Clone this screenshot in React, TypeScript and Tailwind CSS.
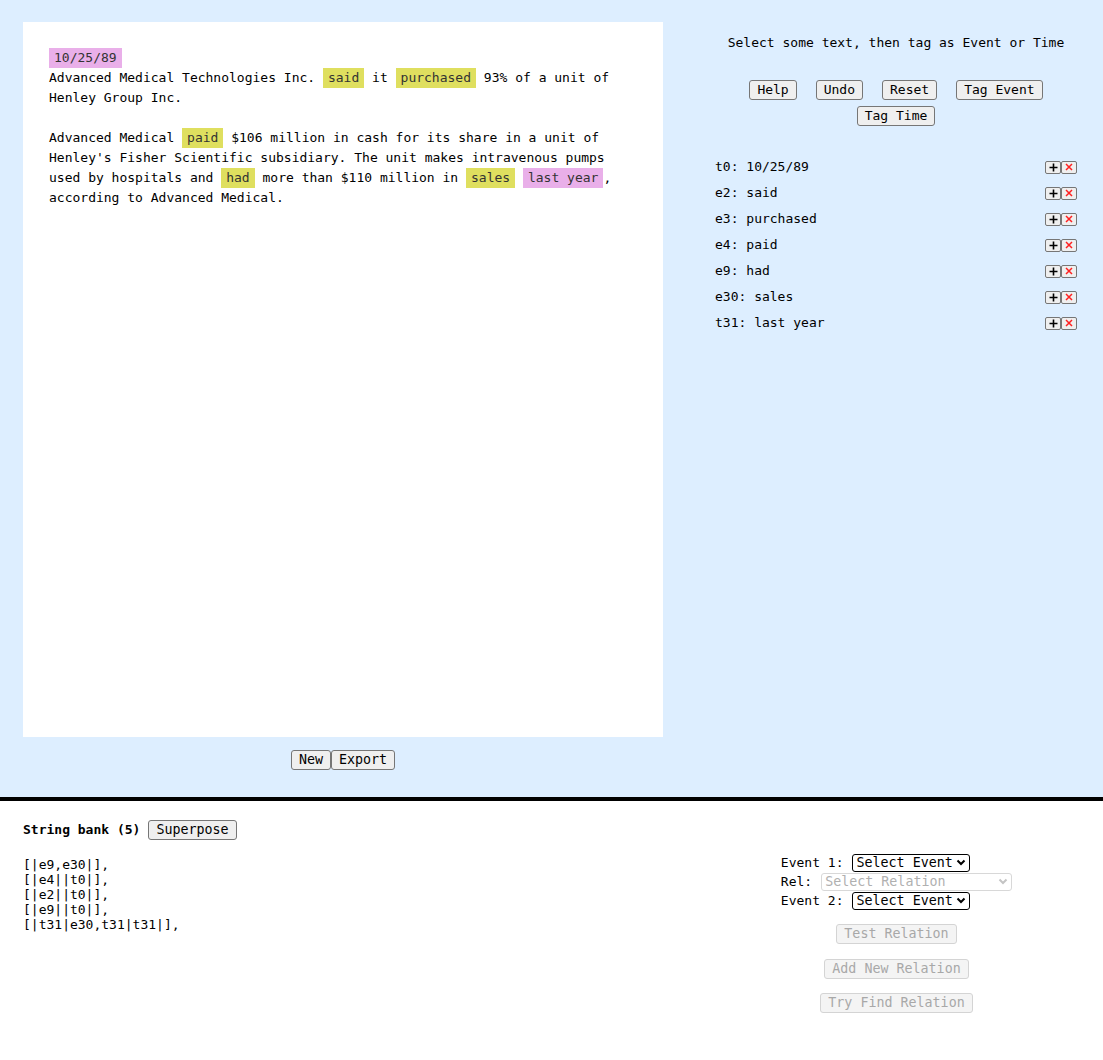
import React from "react";

// Tagged spans in the document text
const Ev = ({ children }: { children: React.ReactNode }) => (
  <span className="inline-block bg-[#dfdf5f] px-[5px] leading-5 text-[#333]">{children}</span>
);
const Tm = ({ children }: { children: React.ReactNode }) => (
  <span className="inline-block bg-[#e9afe9] px-[5px] leading-5 text-[#333]">{children}</span>
);

const Btn = ({
  children,
  disabled,
  small,
}: {
  children: React.ReactNode;
  disabled?: boolean;
  small?: boolean;
}) => (
  <button
    disabled={disabled}
    className={
      (disabled
        ? "border border-[#d4d4d4] bg-[#f4f4f4] text-[#a8a8a8] "
        : "border border-[#767676] bg-[#efefef] text-black ") +
      "rounded-[3px] px-[7px] py-[1px] leading-4 " +
      (small ? "text-[13px]" : "text-[13.33px]")
    }
  >
    {children}
  </button>
);

const Chevron = ({ color }: { color: string }) => (
  <svg width="10" height="7" viewBox="0 0 10 7" className="pointer-events-none absolute right-[4px] top-[6px]">
    <path d="M1.5 1.5 L5 5 L8.5 1.5" fill="none" stroke={color} strokeWidth="2" />
  </svg>
);

const tags = [
  ["t0", "10/25/89"],
  ["e2", "said"],
  ["e3", "purchased"],
  ["e4", "paid"],
  ["e9", "had"],
  ["e30", "sales"],
  ["t31", "last year"],
];

const bank = ["[|e9,e30|],", "[|e4||t0|],", "[|e2||t0|],", "[|e9||t0|],", "[|t31|e30,t31|t31|],"];

function App() {
  return (
    <div className="font-['DejaVu_Sans_Mono',monospace] text-[13px] text-black">
      {/* Annotation area */}
      <div className="flex h-[797px] bg-[#ddeeff]">
        <div className="w-[690px] pl-[23px] pt-[22px]">
          <div className="h-[715px] w-[640px] bg-white px-[26px] pt-[26px] leading-5 whitespace-pre">
            <div>
              <Tm>10/25/89</Tm>
            </div>
            <div>
              Advanced Medical Technologies Inc. <Ev>said</Ev> it <Ev>purchased</Ev> 93% of a unit of
            </div>
            <div>Henley Group Inc.</div>
            <div>&nbsp;</div>
            <div>
              Advanced Medical <Ev>paid</Ev> $106 million in cash for its share in a unit of
            </div>
            <div>Henley's Fisher Scientific subsidiary. The unit makes intravenous pumps</div>
            <div>
              used by hospitals and <Ev>had</Ev> more than $110 million in <Ev>sales</Ev> <Tm>last year</Tm>,
            </div>
            <div>according to Advanced Medical.</div>
          </div>
          <div className="mt-[13px] flex w-[640px] justify-center">
            <Btn>New</Btn>
            <Btn>Export</Btn>
          </div>
        </div>

        <div className="flex-1 pl-[25px] pr-[26px] pt-[33px]">
          <div className="text-center leading-5">Select some text, then tag as Event or Time</div>
          <div className="mt-[27px] flex justify-center gap-[19px]">
            <Btn small>Help</Btn>
            <Btn small>Undo</Btn>
            <Btn small>Reset</Btn>
            <Btn small>Tag Event</Btn>
          </div>
          <div className="mt-[6px] flex justify-center">
            <Btn small>Tag Time</Btn>
          </div>
          <div className="mt-[28px]">
            {tags.map(([id, word]) => (
              <div key={id} className="flex h-[26px] items-center justify-between">
                <span>
                  {id}: {word}
                </span>
                <span className="flex">
                  <span className="flex h-[13px] w-[16px] items-center justify-center rounded-[2px] border border-[#767676] bg-[#efefef]">
                    <svg width="9" height="9" viewBox="0 0 9 9">
                      <path d="M4.5 0.5 V8.5 M0.5 4.5 H8.5" stroke="#000" strokeWidth="1.6" />
                    </svg>
                  </span>
                  <span className="flex h-[13px] w-[16px] items-center justify-center rounded-[2px] border border-[#767676] bg-[#efefef]">
                    <svg width="8" height="8" viewBox="0 0 8 8">
                      <path d="M1 1 L7 7 M7 1 L1 7" stroke="#ff2020" strokeWidth="1.5" />
                    </svg>
                  </span>
                </span>
              </div>
            ))}
          </div>
        </div>
      </div>

      <div className="h-[4px] bg-black" />

      {/* String bank and relations */}
      <div className="flex h-[259px] bg-white">
        <div className="w-[690px] pl-[23px] pt-[19px]">
          <div className="flex items-center">
            <span className="font-bold">String bank (5)</span>
            <span className="ml-[8px]">
              <Btn>Superpose</Btn>
            </span>
          </div>
          <div className="mt-[17px] leading-[15px]">
            {bank.map((s, i) => (
              <div key={i}>{s}</div>
            ))}
          </div>
        </div>

        <div className="flex flex-1 flex-col items-center pt-[52px]">
          <div>
            <div className="flex h-[19px] items-center">
              <span>Event 1:</span>
              <span className="relative ml-[9px]">
                <select className="h-[18px] w-[118px] appearance-none rounded-[3px] border border-black bg-white pl-[3px] text-[13.33px] leading-4">
                  <option>Select Event</option>
                </select>
                <Chevron color="#000" />
              </span>
            </div>
            <div className="flex h-[19px] items-center">
              <span>Rel:</span>
              <span className="relative ml-[9px]">
                <select
                  disabled
                  className="h-[18px] w-[191px] appearance-none rounded-[3px] border border-[#d8d8d8] bg-white pl-[3px] text-[13.33px] leading-4 text-[#b0b0b0]"
                >
                  <option>Select Relation</option>
                </select>
                <Chevron color="#c4c4c4" />
              </span>
            </div>
            <div className="flex h-[19px] items-center">
              <span>Event 2:</span>
              <span className="relative ml-[9px]">
                <select className="h-[18px] w-[118px] appearance-none rounded-[3px] border border-black bg-white pl-[3px] text-[13.33px] leading-4">
                  <option>Select Event</option>
                </select>
                <Chevron color="#000" />
              </span>
            </div>
          </div>
          <div className="mt-[14px]">
            <Btn disabled>Test Relation</Btn>
          </div>
          <div className="mt-[15px]">
            <Btn disabled>Add New Relation</Btn>
          </div>
          <div className="mt-[14px]">
            <Btn disabled>Try Find Relation</Btn>
          </div>
        </div>
      </div>
    </div>
  );
}

export default App;
